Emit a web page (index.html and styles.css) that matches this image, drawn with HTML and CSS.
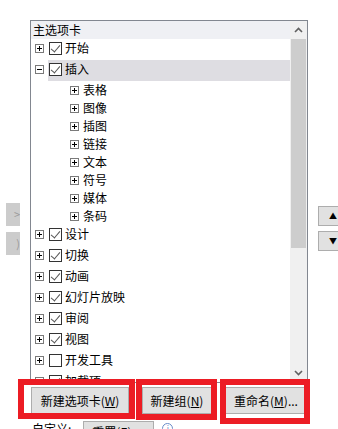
FILE: index.html
```html
<!DOCTYPE html>
<html lang="zh-CN">
<head>
  <meta charset="UTF-8" />
  <meta name="viewport" content="width=device-width, initial-scale=1.0"/>
  <title>自定义功能区</title>
  <link rel="stylesheet" href="styles.css">
</head>
<body>
  <div class="window">
    <div class="main">
      <div class="side-left">
        <div class="ghost-btn">&gt;</div>
        <div class="ghost-btn">)</div>
      </div>

      <div class="listbox">
        <div class="tree">
          <div class="tree-head">主选项卡</div>

          <div class="row top">
            <span class="toggle plus"></span>
            <div class="item"><span class="check on"></span><span class="label">开始</span></div>
          </div>
          <div class="row top">
            <span class="toggle minus"></span>
            <div class="item selected"><span class="check on"></span><span class="label">插入</span></div>
          </div>
          <div class="row sub"><span class="toggle plus"></span><span class="label">表格</span></div>
          <div class="row sub"><span class="toggle plus"></span><span class="label">图像</span></div>
          <div class="row sub"><span class="toggle plus"></span><span class="label">插图</span></div>
          <div class="row sub"><span class="toggle plus"></span><span class="label">链接</span></div>
          <div class="row sub"><span class="toggle plus"></span><span class="label">文本</span></div>
          <div class="row sub"><span class="toggle plus"></span><span class="label">符号</span></div>
          <div class="row sub"><span class="toggle plus"></span><span class="label">媒体</span></div>
          <div class="row sub"><span class="toggle plus"></span><span class="label">条码</span></div>

          <div class="row top">
            <span class="toggle plus"></span>
            <div class="item"><span class="check on"></span><span class="label">设计</span></div>
          </div>
          <div class="row top">
            <span class="toggle plus"></span>
            <div class="item"><span class="check on"></span><span class="label">切换</span></div>
          </div>
          <div class="row top">
            <span class="toggle plus"></span>
            <div class="item"><span class="check on"></span><span class="label">动画</span></div>
          </div>
          <div class="row top">
            <span class="toggle plus"></span>
            <div class="item"><span class="check on"></span><span class="label">幻灯片放映</span></div>
          </div>
          <div class="row top">
            <span class="toggle plus"></span>
            <div class="item"><span class="check on"></span><span class="label">审阅</span></div>
          </div>
          <div class="row top">
            <span class="toggle plus"></span>
            <div class="item"><span class="check on"></span><span class="label">视图</span></div>
          </div>
          <div class="row top">
            <span class="toggle plus"></span>
            <div class="item"><span class="check"></span><span class="label">开发工具</span></div>
          </div>
          <div class="row top">
            <span class="toggle plus"></span>
            <div class="item"><span class="check on"></span><span class="label">加载项</span></div>
          </div>
        </div>

        <div class="scrollbar">
          <div class="arrow">
            <svg width="9" height="6" viewBox="0 0 9 6"><path d="M1 5 L4.5 1.5 L8 5" fill="none" stroke="#606060" stroke-width="1.6"/></svg>
          </div>
          <div class="thumb"></div>
          <div class="track"></div>
          <div class="arrow">
            <svg width="9" height="6" viewBox="0 0 9 6"><path d="M1 1 L4.5 4.5 L8 1" fill="none" stroke="#606060" stroke-width="1.6"/></svg>
          </div>
        </div>
      </div>

      <div class="side-right">
        <div class="move-btn">&#9650;</div>
        <div class="move-btn">&#9660;</div>
      </div>
    </div>

    <div class="actions">
      <button class="btn btn-tab">新建选项卡(<u>W</u>)</button>
      <button class="btn btn-group">新建组(<u>N</u>)</button>
      <button class="btn btn-rename">重命名(<u>M</u>)...</button>
    </div>

    <div class="footer">
      <span class="footer-label">自定义:</span>
      <span class="combo">重置(<u>E</u>) <span class="caret">&#9660;</span></span>
      <span class="info">i</span>
    </div>

    <div class="mark mark-1"></div>
    <div class="mark mark-2"></div>
    <div class="mark mark-3"></div>
  </div>
</body>
</html>
```

FILE: styles.css
```css
body {
  margin: 0;
  background: #fff;
  font-family: "Noto Sans CJK SC", "Microsoft YaHei", sans-serif;
  font-size: 12px;
  color: #000;
}
.window {
  position: relative;
  width: 338px;
  height: 429px;
  overflow: hidden;
  background: #fff;
}
.main {
  display: flex;
  padding-top: 20px;
}
.side-left {
  width: 30px;
  flex-shrink: 0;
  display: flex;
  flex-direction: column;
  gap: 6px;
  padding-top: 183px;
}
.ghost-btn {
  width: 14px;
  height: 23px;
  margin-left: 6px;
  background: #cccccc;
  color: #9a9a9a;
  font-size: 11px;
  line-height: 23px;
  text-align: right;
  overflow: hidden;
}
.listbox {
  width: 278px;
  height: 363px;
  flex-shrink: 0;
  box-sizing: border-box;
  border: 1px solid #828790;
  display: flex;
  overflow: hidden;
}
.tree {
  flex: 1;
  overflow: hidden;
}
.tree-head {
  height: 18px;
  line-height: 18px;
  padding-left: 2px;
  background: #eff0f4;
}
.row {
  display: flex;
  align-items: center;
}
.row.top {
  height: 21px;
  padding-left: 4px;
}
.row.sub {
  height: 18px;
  padding-left: 39px;
}
.toggle {
  position: relative;
  width: 9px;
  height: 9px;
  box-sizing: border-box;
  border: 1px solid #7a7a7a;
  background: #fff;
  flex-shrink: 0;
}
.toggle::before {
  content: "";
  position: absolute;
  left: 1px;
  top: 3px;
  width: 5px;
  height: 1px;
  background: #000;
}
.toggle.plus::after {
  content: "";
  position: absolute;
  left: 3px;
  top: 1px;
  width: 1px;
  height: 5px;
  background: #000;
}
.row.top .toggle {
  margin-bottom: 3px;
}
.item {
  flex: 1;
  height: 21px;
  margin-left: 4px;
  padding-bottom: 3px;
  box-sizing: border-box;
  display: flex;
  align-items: center;
}
.item.selected {
  background: #dedde2;
}
.check {
  position: relative;
  width: 13px;
  height: 13px;
  margin-left: 1px;
  box-sizing: border-box;
  border: 1px solid #333;
  background: #fff;
  flex-shrink: 0;
}
.check.on::after {
  content: "";
  position: absolute;
  left: 3px;
  top: 0px;
  width: 4px;
  height: 8px;
  border-right: 1px solid #555;
  border-bottom: 1px solid #555;
  transform: rotate(40deg);
}
.label {
  margin-left: 3px;
  line-height: 16px;
  white-space: nowrap;
}
.row.sub .label {
  margin-left: 4px;
}
.scrollbar {
  width: 17px;
  flex-shrink: 0;
  display: flex;
  flex-direction: column;
  background: #f0f0f0;
}
.arrow {
  height: 18px;
  display: flex;
  align-items: center;
  justify-content: center;
}
.thumb {
  height: 209px;
  margin: 0 1px;
  background: #cdcdcd;
}
.track {
  flex: 1;
}
.side-right {
  flex-shrink: 0;
  margin-left: 10px;
  display: flex;
  flex-direction: column;
  gap: 5px;
  padding-top: 186px;
}
.move-btn {
  width: 26px;
  height: 20px;
  box-sizing: border-box;
  border: 1px solid #adadad;
  background: #e1e1e1;
  font-size: 8px;
  line-height: 18px;
  padding-left: 10px;
  color: #000;
}
.actions {
  display: flex;
  gap: 13px;
  padding-left: 31px;
  margin-top: 4px;
}
.btn {
  height: 27px;
  flex-shrink: 0;
  box-sizing: border-box;
  border: 1px solid #adadad;
  background: #e1e1e1;
  font-family: inherit;
  font-size: 12px;
  color: #000;
  padding: 0;
}
.btn-tab {
  width: 98px;
}
.btn-group {
  width: 70px;
}
.btn-rename {
  width: 82px;
}
.footer {
  display: flex;
  align-items: flex-start;
  padding-left: 32px;
  margin-top: 7px;
  line-height: 16px;
}
.combo {
  margin-left: 12px;
  width: 71px;
  height: 22px;
  box-sizing: border-box;
  border: 1px solid #adadad;
  background: #e1e1e1;
  padding-left: 8px;
  line-height: 20px;
}
.caret {
  font-size: 8px;
  margin-left: 8px;
}
.info {
  margin-left: 8px;
  margin-top: 2px;
  width: 11px;
  height: 11px;
  box-sizing: border-box;
  border: 1px solid #6a8cc8;
  border-radius: 50%;
  color: #6a8cc8;
  font-size: 8px;
  line-height: 9px;
  text-align: center;
}
.mark {
  position: absolute;
  box-sizing: border-box;
  border: 6px solid #ec1c24;
}
.mark-1 {
  left: 18px;
  top: 379px;
  width: 117px;
  height: 40px;
}
.mark-2 {
  left: 136px;
  top: 379px;
  width: 81px;
  height: 41px;
}
.mark-3 {
  left: 220px;
  top: 379px;
  width: 90px;
  height: 45px;
}
```
